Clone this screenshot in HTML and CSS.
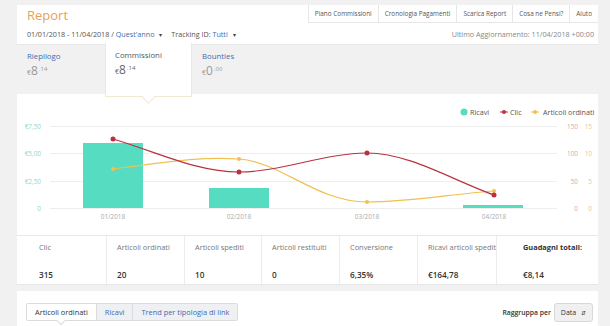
FILE: index.html
```html
<!DOCTYPE html>
<html lang="it">
<head>
    <meta charset="UTF-8">
    <title>Report</title>
    <link rel="stylesheet" href="styles.css">
</head>
<body>
    <div class="page">
        <section class="report">
            <header class="report-head">
                <h1 class="title">Report</h1>
                <nav class="top-nav">
                    <a href="#">Piano Commissioni</a>
                    <a href="#">Cronologia Pagamenti</a>
                    <a href="#">Scarica Report</a>
                    <a href="#">Cosa ne Pensi?</a>
                    <a href="#">Aiuto</a>
                </nav>
            </header>

            <div class="filters">
                <div class="range">
                    01/01/2018 - 11/04/2018 / <span class="link">Quest'anno</span><span class="caret">&#9662;</span>
                    <span class="track">Tracking ID: <span class="link">Tutti</span><span class="caret">&#9662;</span></span>
                </div>
                <div class="updated">Ultimo Aggiornamento: 11/04/2018 +00:00</div>
            </div>

            <div class="tabs">
                <div class="tab">
                    <div class="tab-name link">Riepilogo</div>
                    <div class="amount"><span class="cur">€</span><span class="int">8</span><span class="dec">.14</span></div>
                </div>
                <div class="tab active">
                    <div class="tab-name">Commissioni</div>
                    <div class="amount"><span class="cur">€</span><span class="int">8</span><span class="dec">.14</span></div>
                </div>
                <div class="tab">
                    <div class="tab-name link">Bounties</div>
                    <div class="amount"><span class="cur">€</span><span class="int">0</span><span class="dec">.00</span></div>
                </div>
            </div>

            <div class="chart">
                <svg width="580" height="141" viewBox="0 0 580 141">
                    <!-- legend -->
                    <circle cx="447" cy="18" r="3.5" fill="#56dcc0"/>
                    <text class="legend" x="453" y="20.5">Ricavi</text>
                    <line x1="483" y1="18" x2="491" y2="18" stroke="#b83240" stroke-width="1"/>
                    <circle cx="487" cy="18" r="2" fill="#b83240"/>
                    <text class="legend" x="493" y="20.5">Clic</text>
                    <line x1="514" y1="18" x2="522" y2="18" stroke="#f0c050" stroke-width="1"/>
                    <circle cx="518" cy="18" r="2" fill="#f0c050"/>
                    <text class="legend" x="526" y="20.5">Articoli ordinati</text>

                    <!-- grid -->
                    <g stroke="#eeeeee" stroke-width="1">
                        <line x1="33" y1="32.5" x2="540" y2="32.5"/>
                        <line x1="33" y1="59.5" x2="540" y2="59.5"/>
                        <line x1="33" y1="87.5" x2="540" y2="87.5"/>
                        <line x1="33" y1="114.5" x2="540" y2="114.5"/>
                    </g>

                    <g class="axis-left" text-anchor="end">
                        <text x="24" y="34.5">€7,50</text>
                        <text x="24" y="61.5">€5,00</text>
                        <text x="24" y="89.5">€2,50</text>
                        <text x="24" y="116.5">0</text>
                    </g>
                    <g class="axis-right" text-anchor="end">
                        <text x="561" y="34.5">150</text>
                        <text x="561" y="61.5">100</text>
                        <text x="561" y="89.5">50</text>
                        <text x="561" y="116.5">0</text>
                    </g>
                    <g class="axis-right2" text-anchor="end">
                        <text x="575" y="34.5">15</text>
                        <text x="575" y="61.5">10</text>
                        <text x="575" y="89.5">5</text>
                        <text x="575" y="116.5">0</text>
                    </g>

                    <!-- bars -->
                    <g fill="#56dcc0">
                        <rect x="66" y="49" width="60" height="65"/>
                        <rect x="192" y="94" width="60" height="20"/>
                        <rect x="446" y="111" width="60" height="3"/>
                    </g>

                    <g class="axis-x" text-anchor="middle">
                        <text x="96" y="125">01/2018</text>
                        <text x="222" y="125">02/2018</text>
                        <text x="350" y="125">03/2018</text>
                        <text x="477" y="125">04/2018</text>
                    </g>

                    <!-- Articoli ordinati -->
                    <path d="M96,75 C138,70 180,62 222,65 C264,68 300,108 350,108 C392,108 435,100 477,97" fill="none" stroke="#f0c050" stroke-width="1.2"/>
                    <g fill="#f0c050">
                        <circle cx="96" cy="75" r="2"/>
                        <circle cx="222" cy="65" r="2"/>
                        <circle cx="350" cy="108" r="2"/>
                        <circle cx="477" cy="97" r="2"/>
                    </g>

                    <!-- Clic -->
                    <path d="M96,45 C140,58 180,78 222,78 C264,78 308,59 350,59 C392,59 435,86 477,101" fill="none" stroke="#b83240" stroke-width="1.2"/>
                    <g fill="#b83240">
                        <circle cx="96" cy="45" r="2.5"/>
                        <circle cx="222" cy="78" r="2.5"/>
                        <circle cx="350" cy="59" r="2.5"/>
                        <circle cx="477" cy="101" r="2.5"/>
                    </g>
                </svg>
            </div>

            <div class="stats">
                <div class="stat first">
                    <div class="stat-label">Clic</div>
                    <div class="stat-value">315</div>
                </div>
                <div class="stat">
                    <div class="stat-label">Articoli ordinati</div>
                    <div class="stat-value">20</div>
                </div>
                <div class="stat">
                    <div class="stat-label">Articoli spediti</div>
                    <div class="stat-value">10</div>
                </div>
                <div class="stat">
                    <div class="stat-label">Articoli restituiti</div>
                    <div class="stat-value">0</div>
                </div>
                <div class="stat">
                    <div class="stat-label">Conversione</div>
                    <div class="stat-value">6,35%</div>
                </div>
                <div class="stat">
                    <div class="stat-label">Ricavi articoli spediti</div>
                    <div class="stat-value">€164,78</div>
                </div>
                <div class="stat last">
                    <div class="stat-label strong">Guadagni totali:</div>
                    <div class="stat-value">€8,14</div>
                </div>
            </div>
        </section>

        <section class="bottom">
            <div class="btn-group">
                <button class="seg active">Articoli ordinati</button>
                <button class="seg">Ricavi</button>
                <button class="seg">Trend per tipologia di link</button>
            </div>
            <div class="group-by">
                <span class="group-label">Raggruppa per</span>
                <span class="select">Data <span class="arrows">&#8693;</span></span>
            </div>
        </section>
    </div>
</body>
</html>
```

FILE: styles.css
```css
* {
    box-sizing: border-box;
}
body {
    margin: 0;
    background-color: #f1f1f1;
    font-family: "Open Sans", "Noto Sans", Arial, sans-serif;
    color: #555;
    overflow: hidden;
}
.page {
    padding: 5px 0 0 17px;
    width: 610px;
}
.report, .bottom {
    width: 581px;
    background-color: #fff;
}
.report-head {
    display: flex;
    justify-content: space-between;
    height: 20px;
}
.title {
    margin: 0;
    padding-left: 10px;
    font-size: 13px;
    font-weight: 400;
    line-height: 20px;
    color: #e8a15a;
}
.top-nav {
    display: flex;
    height: 18px;
}
.top-nav a {
    display: block;
    padding: 0 6px;
    font-size: 6.4px;
    line-height: 17px;
    color: #555;
    text-decoration: none;
    border-left: 1px solid #e6e6e6;
    border-bottom: 1px solid #e6e6e6;
}
.link {
    color: #3c6db0;
}
.filters {
    display: flex;
    justify-content: space-between;
    height: 19px;
    padding: 0 4px 0 10px;
    font-size: 7.2px;
    line-height: 19px;
}
.caret {
    font-size: 6px;
    margin-left: 5px;
    color: #444;
}
.track {
    margin-left: 7px;
}
.updated {
    color: #888;
}
.tabs {
    display: flex;
    height: 50px;
    background-color: #f1f1f1;
    border-top: 1px solid #e8e8e8;
}
.tab {
    width: 88px;
    padding: 6px 0 0 10px;
}
.tab-name {
    font-size: 7.8px;
    line-height: 10px;
}
.amount {
    margin-top: 1px;
    line-height: 14px;
    color: #999;
}
.cur {
    font-size: 7px;
}
.int {
    font-size: 12px;
}
.dec {
    font-size: 6px;
    vertical-align: 4px;
    margin-left: 1px;
}
.tab.active {
    position: relative;
    z-index: 1;
    width: 87px;
    height: 54px;
    margin: -2px 0 -3px;
    padding: 7px 0 0 9px;
    background-color: #fff;
    border: 1px solid #f3e8d2;
    border-top: none;
}
.tab.active .tab-name {
    color: #555;
}
.tab.active .amount {
    color: #666;
}
.tab.active::after {
    content: "";
    position: absolute;
    left: 38px;
    bottom: -6px;
    width: 8px;
    height: 8px;
    background-color: #fff;
    border-right: 1px solid #f3e8d2;
    border-bottom: 1px solid #f3e8d2;
    transform: rotate(45deg);
}
.tab + .tab:not(.active) {
    padding-left: 10px;
}
.chart {
    height: 141px;
}
.chart svg {
    display: block;
    font-family: "Open Sans", "Noto Sans", Arial, sans-serif;
}
.legend {
    font-size: 7.2px;
    fill: #555;
}
.axis-left {
    font-size: 6.4px;
    fill: #8ed8c8;
}
.axis-right {
    font-size: 6.4px;
    fill: #d8a9aa;
}
.axis-right2 {
    font-size: 6.4px;
    fill: #dcc7a2;
}
.axis-x {
    font-size: 6.4px;
    fill: #aaa;
}
.stats {
    display: grid;
    grid-template-columns: 90px 78px 77px 78px 78px 79px 1fr;
    height: 50px;
    border-top: 1px solid #e8e8e8;
    border-bottom: 1px solid #e6e6e6;
}
.stat {
    padding: 6px 0 0 10px;
    border-right: 1px solid #ececec;
    white-space: nowrap;
    overflow: hidden;
}
.stat.first {
    padding-left: 22px;
}
.stat.last {
    padding-left: 26px;
    border-right: none;
}
.stat-label {
    font-size: 7.4px;
    line-height: 10px;
    color: #777;
}
.stat-label.strong {
    font-weight: 700;
    color: #333;
}
.stat-value {
    margin-top: 17px;
    font-size: 8.2px;
    font-weight: 600;
    line-height: 12px;
    color: #333;
}
.bottom {
    display: flex;
    justify-content: space-between;
    align-items: flex-start;
    margin-top: 6px;
    height: 40px;
    padding: 12px 5px 0 9px;
}
.btn-group {
    display: flex;
    border: 1px solid #dcdcdc;
    border-radius: 2px;
}
.seg {
    position: relative;
    height: 16px;
    padding: 0 8px;
    font-family: inherit;
    font-size: 7.4px;
    color: #3c6db0;
    background-color: #eef0f3;
    border: none;
    border-left: 1px solid #dcdcdc;
}
.seg.active {
    color: #333;
    background-color: #fff;
    border-left: none;
}
.seg.active::after {
    content: "";
    position: absolute;
    left: 31px;
    bottom: -4px;
    width: 5px;
    height: 5px;
    background-color: #fff;
    border-right: 1px solid #dcdcdc;
    border-bottom: 1px solid #dcdcdc;
    transform: rotate(45deg);
}
.group-by {
    display: flex;
    align-items: center;
    gap: 3px;
}
.group-label {
    font-size: 6.8px;
    font-weight: 600;
    color: #333;
}
.select {
    height: 19px;
    padding: 0 6px;
    font-size: 7px;
    line-height: 17px;
    color: #333;
    background-color: #f0f0f0;
    border: 1px solid #d8d8d8;
    border-radius: 3px;
}
.arrows {
    font-size: 6px;
    margin-left: 3px;
}
```
